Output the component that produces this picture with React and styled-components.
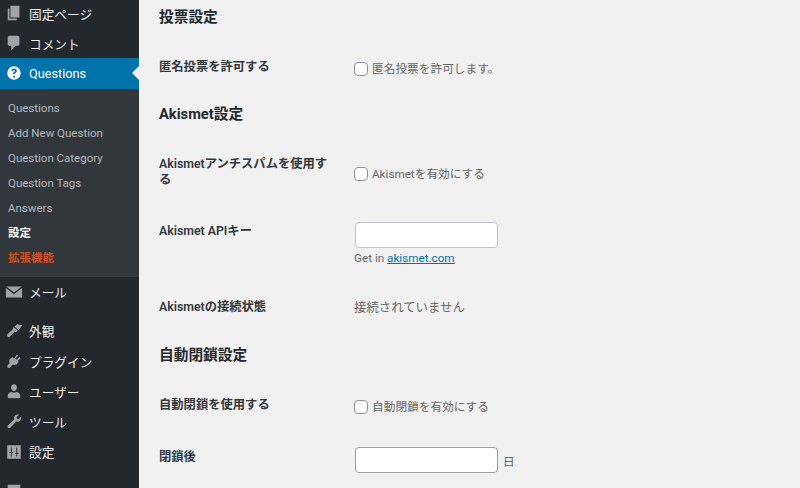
import React from 'react'
import styled, { createGlobalStyle } from 'styled-components'

const Global = createGlobalStyle`
  html, body {
    margin: 0;
    padding: 0;
    height: 100%;
    overflow: hidden;
    background: #f1f1f1;
  }
  body {
    font-family: Roboto, "Noto Sans CJK JP", sans-serif;
    font-size: 12px;
    color: #444;
  }
`

const Page = styled.div`
  display: flex;
  width: 800px;
  height: 488px;
  overflow: hidden;
`

const Sidebar = styled.nav`
  flex: 0 0 139px;
  height: 488px;
  overflow: hidden;
  background: #23282d;
`

const MenuList = styled.ul`
  list-style: none;
  margin: -2px 0 0;
  padding: 0;
`

const MenuItem = styled.li`
  position: relative;
  display: flex;
  align-items: center;
  height: 30.2px;
  padding-left: 4.5px;
  font-size: 12.7px;
  color: ${p => (p.$active ? '#fff' : '#eee')};
  background: ${p => (p.$active ? '#0073aa' : 'transparent')};
  svg {
    flex: 0 0 18px;
    width: 18px;
    height: 18px;
    margin-right: 6.5px;
    fill: ${p => (p.$active ? '#fff' : '#a0a5aa')};
  }
`

const Arrow = styled.span`
  position: absolute;
  right: 0;
  top: 8px;
  border: 7px solid transparent;
  border-right-color: #f1f1f1;
  border-left-width: 0;
`

const Separator = styled.li`
  height: 9px;
`

const SubMenu = styled.ul`
  list-style: none;
  margin: 0;
  padding: 7px 0 6px;
  background: #32373c;
`

const SubItem = styled.li`
  height: 25px;
  line-height: 24px;
  padding-left: 8px;
  font-size: 11.5px;
  font-weight: ${p => (p.$bold ? 700 : 400)};
  color: ${p => p.$color || '#b4b9be'};
`

const Main = styled.main`
  flex: 1;
  padding: 8px 0 0 20px;
  background: #f1f1f1;
`

const Heading = styled.h2`
  margin: ${p => p.$gap || 0}px 0 ${p => p.$after || 16}px;
  font-size: 14.7px;
  line-height: 18px;
  font-weight: 700;
  color: #23282d;
`

const Row = styled.div`
  display: grid;
  grid-template-columns: 195px 1fr;
  align-items: center;
  height: ${p => p.$height}px;
`

const Label = styled.div`
  align-self: start;
  width: 170px;
  padding-top: ${p => p.$top || 15}px;
  font-size: 12.3px;
  line-height: 16px;
  font-weight: 600;
  color: #32373c;
`

const Field = styled.div`
  font-size: 12.4px;
  line-height: 18px;
  color: #666;
`

const CheckLabel = styled.label`
  display: flex;
  align-items: center;
  gap: 4px;
  font-size: 11.7px;
  color: #666;
`

const Box = styled.span`
  flex: 0 0 14px;
  box-sizing: border-box;
  width: 14px;
  height: 14px;
  border: 1px solid #8c929a;
  border-radius: 4px;
  background: #fff;
`

const TextInput = styled.input`
  display: block;
  box-sizing: border-box;
  width: 143px;
  height: 26px;
  margin-left: 1px;
  border: 1px solid ${p => p.$border};
  border-radius: 4px;
  background: #fff;
`

const InlineField = styled.div`
  display: flex;
  align-items: center;
  gap: 5px;
  font-size: 11.7px;
  color: #666;
`

const Hint = styled.p`
  margin: 1px 0 3px;
  font-size: 11.7px;
  line-height: 18px;
  color: #666;
  a {
    color: #0073aa;
    text-decoration: underline;
  }
`

const Pages = () => (
  <svg viewBox="0 0 20 20"><path d="M6 15V2h10v13H6zm-1 1h8v2H3V5h2v11z" /></svg>
)
const Comment = () => (
  <svg viewBox="0 0 20 20"><path d="M5 2h9c1.100 0 2 .9 2 2v7c0 1.100-.9 2-2 2h-2l-5 5v-5H5c-1.100 0-2-.9-2-2V4c0-1.100.9-2 2-2z" /></svg>
)
const Help = () => (
  <svg viewBox="0 0 20 20">
    <path fillRule="evenodd" d="M10 2.500a7.500 7.500 0 1 1 0 15 7.500 7.500 0 0 1 0-15zm-1 10.500v2h2v-2H9zm1.100-8c-1.800 0-3 1-3.100 2.700h2c.1-.7.4-1 1.100-1 .6 0 1 .3 1 .9 0 .4-.2.700-.8 1.100-1 .7-1.300 1.200-1.300 2.500h2c0-.7.200-.9.800-1.300.8-.6 1.300-1.200 1.300-2.300 0-1.600-1.200-2.600-3-2.600z" />
  </svg>
)
const Mail = () => (
  <svg viewBox="0 0 20 20"><path d="M1.500 4h17l-8.500 6.500L1.500 4z" /><path d="M1 5.500l9 7 9-7V16H1V5.500z" /></svg>
)
const Brush = () => (
  <svg viewBox="0 0 20 20"><path d="M13.500 2.500L19 3.500l-2.500 4-1.500 1.500-4.500-4zM9.500 5.500l4.500 4-1.500 2-2-.5-5 5c-.8.800-2 .9-2.700.1-.8-.7-.7-1.900.1-2.700L8 9z" /></svg>
)
const Plugin = () => (
  <svg viewBox="0 0 20 20"><path d="M13.100 2.900l1.400 1.400-3 3 1.300 1.300 3-3 1.400 1.400-3 3 1 1-2 2.300c-1.400 1.300-3.300 1.600-4.800.7L5.500 17.500H2.800v-2.700l2.400-2.400c-.9-1.500-.6-3.400.7-4.800l2.300-2 1.900 1.900z" /></svg>
)
const User = () => (
  <svg viewBox="0 0 20 20"><path d="M10 2.500c2 0 3.300 1.600 3.300 3.600S12 10 10 10 6.700 8.100 6.700 6.100 8 2.500 10 2.500zM3 15.500c0-2.800 2.500-4.500 4.500-4.500.7.600 1.500.9 2.500.9s1.800-.3 2.500-.9c2 0 4.500 1.700 4.500 4.500V17c0 .6-.5 1-1 1H4c-.5 0-1-.4-1-1v-1.500z" /></svg>
)
const Wrench = () => (
  <svg viewBox="0 0 20 20"><path d="M17.800 5.200c.5 1.500.2 3.200-1 4.400-1.200 1.200-2.900 1.500-4.300 1l-6.400 6.700c-.8.800-2 .9-2.700.1-.8-.7-.7-1.900.1-2.700l6.700-6.400c-.5-1.400-.2-3.100 1-4.300 1.200-1.200 2.900-1.500 4.400-1L12.800 5.800l.4 1.700 1.700.5z" /></svg>
)
const Settings = () => (
  <svg viewBox="0 0 20 20"><path fillRule="evenodd" d="M2.500 2.500h15v15h-15v-15zM6.500 5v5H5v1h1.500v4h1v-4H9v-1H7.500V5h-1zm6 0v6H11v1h1.500v3h1v-3H15v-1h-1.500V5h-1z" /></svg>
)
const Collapse = () => (
  <svg viewBox="0 0 20 20"><path d="M3 3h14v14H3z" /></svg>
)

const subItems = ['Questions', 'Add New Question', 'Question Category', 'Question Tags', 'Answers']

const App = () => (
  <Page>
    <Global />
    <Sidebar>
      <MenuList>
        <MenuItem><Pages />固定ページ</MenuItem>
        <MenuItem><Comment />コメント</MenuItem>
        <MenuItem $active><Help />Questions<Arrow /></MenuItem>
        <SubMenu>
          {subItems.map(s => <SubItem key={s}>{s}</SubItem>)}
          <SubItem $bold $color="#fff">設定</SubItem>
          <SubItem $bold $color="#d54e21">拡張機能</SubItem>
        </SubMenu>
        <MenuItem><Mail />メール</MenuItem>
        <Separator />
        <MenuItem><Brush />外観</MenuItem>
        <MenuItem><Plugin />プラグイン</MenuItem>
        <MenuItem><User />ユーザー</MenuItem>
        <MenuItem><Wrench />ツール</MenuItem>
        <MenuItem><Settings />設定</MenuItem>
        <Separator />
        <MenuItem><Collapse /></MenuItem>
      </MenuList>
    </Sidebar>
    <Main>
      <Heading>投票設定</Heading>
      <Row $height={54}>
        <Label $top={17}>匿名投票を許可する</Label>
        <Field><CheckLabel><Box />匿名投票を許可します。</CheckLabel></Field>
      </Row>
      <Heading $gap={9}>Akismet設定</Heading>
      <Row $height={69}>
        <Label $top={17}>Akismetアンチスパムを使用する</Label>
        <Field><CheckLabel><Box />Akismetを有効にする</CheckLabel></Field>
      </Row>
      <Row $height={76}>
        <Label>Akismet APIキー</Label>
        <Field>
          <TextInput type="text" $border="#bfc2c6" />
          <Hint>Get in <a href="#akismet">akismet.com</a></Hint>
        </Field>
      </Row>
      <Row $height={48}>
        <Label>Akismetの接続状態</Label>
        <Field>接続されていません</Field>
      </Row>
      <Heading $gap={14} $after={17}>自動閉鎖設定</Heading>
      <Row $height={51}>
        <Label $top={16}>自動閉鎖を使用する</Label>
        <Field><CheckLabel><Box />自動閉鎖を有効にする</CheckLabel></Field>
      </Row>
      <Row $height={56}>
        <Label $top={17}>閉鎖後</Label>
        <InlineField><TextInput type="text" $border="#9a9da1" />日</InlineField>
      </Row>
    </Main>
  </Page>
)

export default App
